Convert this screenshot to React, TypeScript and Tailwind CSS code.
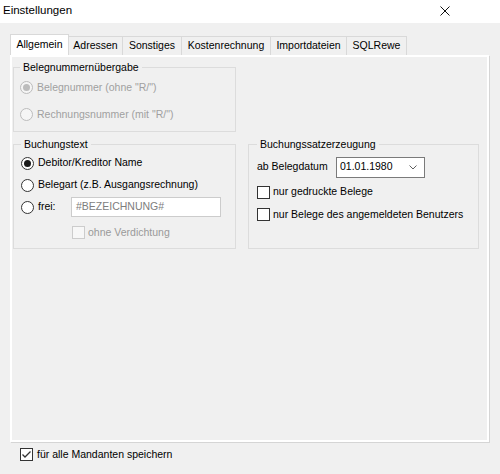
import React from "react";

const font = { fontFamily: '"Liberation Sans", Arial, sans-serif' };

const Radio = ({ checked, disabled }: { checked?: boolean; disabled?: boolean }) => (
  <span
    className={`flex items-center justify-center w-[13px] h-[13px] rounded-full border shrink-0 ${
      disabled ? "border-[#bcbcbc] bg-[#f5f5f5]" : "border-[#333333] bg-white"
    }`}
  >
    {checked && (
      <span className={`w-[7px] h-[7px] rounded-full ${disabled ? "bg-[#bcbcbc]" : "bg-[#1a1a1a]"}`} />
    )}
  </span>
);

const Check = ({ checked, disabled }: { checked?: boolean; disabled?: boolean }) => (
  <span
    className={`flex items-center justify-center w-[13px] h-[13px] border shrink-0 ${
      disabled ? "border-[#cccccc] bg-[#f7f7f7]" : "border-[#333333] bg-white"
    }`}
  >
    {checked && (
      <svg width="11" height="11" viewBox="0 0 11 11">
        <polyline points="1.5,5.5 4,8 9.5,2.5" fill="none" stroke="#333" strokeWidth="1.3" />
      </svg>
    )}
  </span>
);

const Group = ({ title, className, children }: { title: string; className?: string; children: React.ReactNode }) => (
  <fieldset className={`border border-[#dcdcdc] ${className ?? ""}`}>
    <legend className="px-[3px] leading-[13px] text-[10.5px] text-black">{title}</legend>
    {children}
  </fieldset>
);

const tabs = [
  { label: "Adressen", w: "w-[54px]" },
  { label: "Sonstiges", w: "w-[59px]" },
  { label: "Kostenrechnung", w: "w-[89px]" },
  { label: "Importdateien", w: "w-[76px]" },
  { label: "SQLRewe", w: "w-[60px]" },
];

export default function App() {
  return (
    <div className="w-[500px] h-[474px] flex flex-col bg-[#f0f0f0] text-[10.5px] text-black overflow-hidden" style={font}>
      {/* title bar */}
      <div className="h-[23px] bg-white flex items-center justify-between pl-[3px] pr-[50px]">
        <span className="text-[11.5px] leading-none -mt-[2px]">Einstellungen</span>
        <svg width="10" height="10" viewBox="0 0 10 10" className="-mt-[1px]">
          <path d="M0.5 0.5 L9.5 9.5 M9.5 0.5 L0.5 9.5" stroke="#111" strokeWidth="1" />
        </svg>
      </div>

      <div className="flex-1 flex flex-col px-[10px] pt-[11px]">
        {/* tabs */}
        <div className="flex items-end h-[21px] relative z-10">
          <div className="w-[59px] h-[21px] bg-white border border-b-0 border-[#d9d9d9] flex items-center justify-center pb-[1px]">
            Allgemein
          </div>
          {tabs.map((t) => (
            <div
              key={t.label}
              className={`${t.w} h-[19px] border-t border-r border-[#d9d9d9] bg-[#f0f0f0] flex items-center justify-center`}
            >
              {t.label}
            </div>
          ))}
        </div>

        {/* page */}
        <div className="w-[479px] h-[387px] border-2 border-white shadow-[1px_1px_0_#d5d5d5] pl-px pt-[4px]">
          <div className="grid grid-cols-[223px_231px] gap-x-[12px] gap-y-[6px]">
            <Group title="Belegnummernübergabe" className="pl-[6px] pb-[3px] text-[#a0a0a0]">
              <div className="h-[27px] flex items-center gap-[4px]">
                <Radio checked disabled />
                <span>Belegnummer (ohne "R/")</span>
              </div>
              <div className="h-[27px] flex items-center gap-[4px]">
                <Radio disabled />
                <span>Rechnungsnummer (mit "R/")</span>
              </div>
            </Group>
            <div />

            <Group title="Buchungstext" className="pl-[7px] pb-[2px]">
              <div className="h-[24px] flex items-center gap-[4px]">
                <Radio checked />
                <span>Debitor/Kreditor Name</span>
              </div>
              <div className="h-[20px] flex items-center gap-[4px]">
                <Radio />
                <span>Belegart (z.B. Ausgangsrechnung)</span>
              </div>
              <div className="h-[24px] flex items-center">
                <Radio />
                <span className="ml-[4px] w-[33px]">frei:</span>
                <div className="w-[150px] h-[20px] border border-[#cccccc] bg-white flex items-center pl-[4px] text-[#7d7d7d]">
                  #BEZEICHNUNG#
                </div>
              </div>
              <div className="h-[27px] flex items-center gap-[3px] pl-[51px] text-[#999999]">
                <Check disabled />
                <span>ohne Verdichtung</span>
              </div>
            </Group>

            <Group title="Buchungssatzerzeugung" className="pl-[8px] pb-[2px]">
              <div className="h-[32px] flex items-center">
                <span className="w-[79px]">ab Belegdatum</span>
                <div className="w-[89px] h-[21px] border border-[#7a7a7a] bg-white flex items-center justify-between pl-[3px] pr-[7px]">
                  <span>01.01.1980</span>
                  <svg width="8" height="5" viewBox="0 0 8 5">
                    <polyline points="0.5,0.5 4,4 7.5,0.5" fill="none" stroke="#606060" strokeWidth="1" />
                  </svg>
                </div>
              </div>
              <div className="h-[18px] flex items-center gap-[3px]">
                <Check />
                <span>nur gedruckte Belege</span>
              </div>
              <div className="h-[27px] flex items-center gap-[3px]">
                <Check />
                <span>nur Belege des angemeldeten Benutzers</span>
              </div>
            </Group>
          </div>
        </div>

        {/* footer */}
        <div className="mt-[6px] ml-[10px] h-[13px] flex items-center gap-[4px]">
          <Check checked />
          <span>für alle Mandanten speichern</span>
        </div>
      </div>
    </div>
  );
}
